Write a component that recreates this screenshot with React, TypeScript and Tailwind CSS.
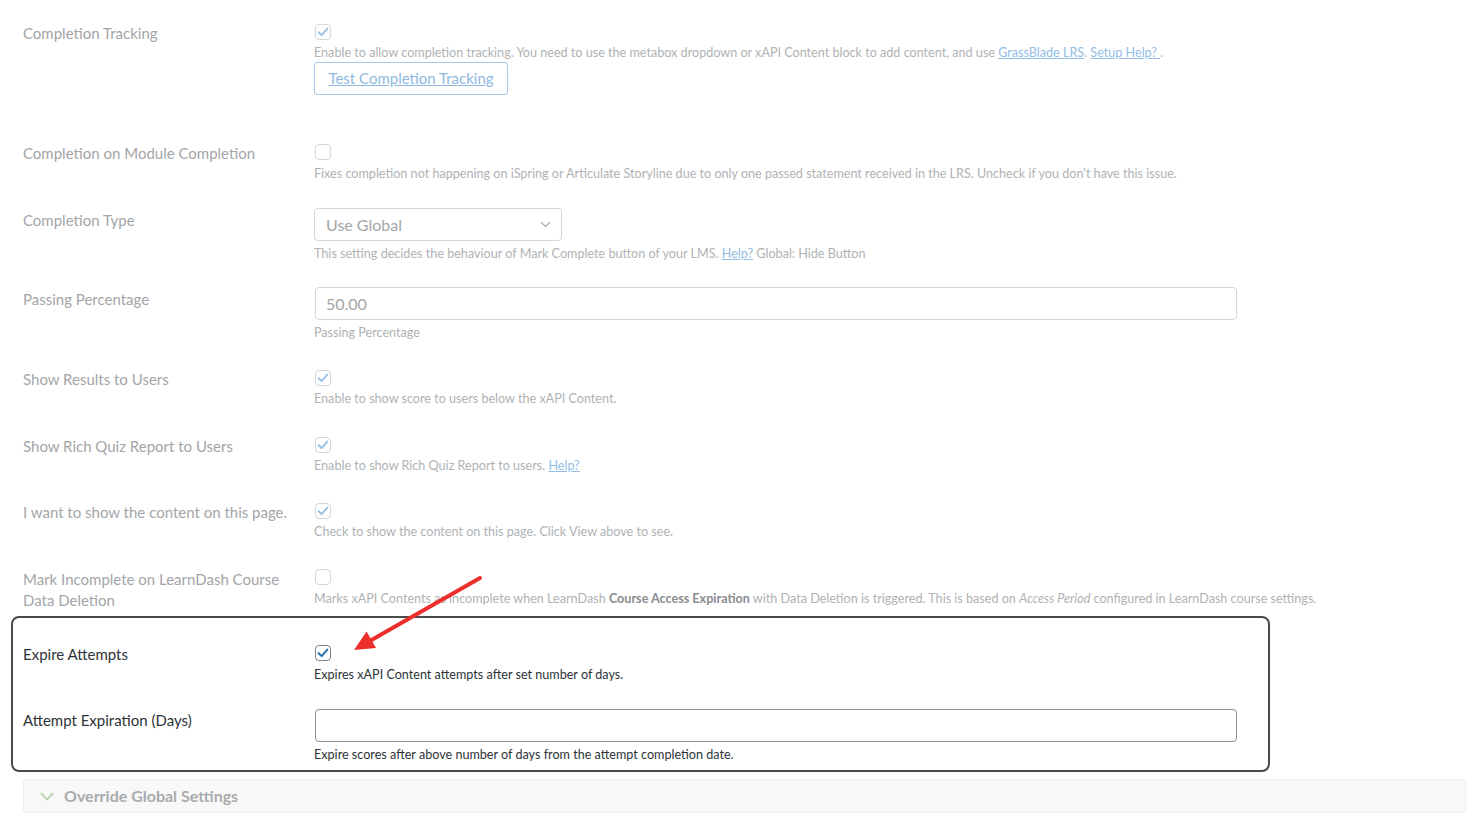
import React from 'react';

const font = { fontFamily: 'Lato, "Liberation Sans", sans-serif' };

function Check({ checked, active }: { checked?: boolean; active?: boolean }) {
  return (
    <div
      className={
        'flex h-4 w-4 items-center justify-center rounded-[4px] border bg-white ' +
        (active ? 'border-[#7e8185]' : 'border-[#d5d6d8]')
      }
    >
      {checked && (
        <svg viewBox="0 0 16 16" className="h-[14px] w-[14px]">
          <path
            d="M3 8.2 L6.4 11.6 L13 4.2"
            fill="none"
            stroke={active ? '#2271b1' : '#9cc1e4'}
            strokeWidth="2.3"
            strokeLinecap="round"
            strokeLinejoin="round"
          />
        </svg>
      )}
    </div>
  );
}

function Row({
  label,
  children,
  rowClass,
  labelClass,
  active,
}: {
  label: React.ReactNode;
  children: React.ReactNode;
  rowClass: string;
  labelClass: string;
  active?: boolean;
}) {
  return (
    <div className={'flex ' + rowClass}>
      <div
        className={
          'w-[291px] shrink-0 pr-2 text-[15px] leading-[21px] ' +
          (active ? 'text-[#2c3338]' : 'text-[#a3a5a8]') +
          ' ' +
          labelClass
        }
      >
        {label}
      </div>
      <div className="flex min-w-0 flex-1 flex-col items-start">{children}</div>
    </div>
  );
}

function Desc({ children, active, className }: { children: React.ReactNode; active?: boolean; className?: string }) {
  return (
    <p
      className={
        'relative top-[1px] text-[12.6px] leading-[16px] ' +
        (active ? 'text-[#2c3338]' : 'text-[#b0b2b4]') +
        ' ' +
        (className ?? 'mt-[4px]')
      }
    >
      {children}
    </p>
  );
}

function Link({ children }: { children: React.ReactNode }) {
  return <span className="text-[#93bde4] underline">{children}</span>;
}

export default function App() {
  return (
    <div className="relative min-h-[833px] w-[1480px] bg-white pl-[23px] pt-[24px]" style={font}>
      <Row label="Completion Tracking" rowClass="" labelClass="-mt-[1px]">
        <div className="ml-[1px]">
          <Check checked />
        </div>
        <Desc>
          Enable to allow completion tracking. You need to use the metabox dropdown or xAPI Content block to add content,
          and use <Link>GrassBlade LRS</Link>. <Link>Setup Help? </Link>.
        </Desc>
        <button className="mt-[2px] h-[33px] w-[194px] rounded-[3px] border border-[#a9c9e8] bg-white text-[15px] text-[#8fb9e2] underline">
          Test Completion Tracking
        </button>
      </Row>

      <Row label="Completion on Module Completion" rowClass="mt-[49px]" labelClass="-mt-[1px]">
        <div className="ml-[1px]">
          <Check />
        </div>
        <Desc className="mt-[5px]">
          Fixes completion not happening on iSpring or Articulate Storyline due to only one passed statement received in
          the LRS. Uncheck if you don't have this issue.
        </Desc>
      </Row>

      <Row label="Completion Type" rowClass="mt-[27px]" labelClass="mt-[2px]">
        <div className="flex h-[33px] w-[248px] items-center justify-between rounded-[4px] border border-[#d5d6d8] bg-white pl-[11px] pr-[10px] text-[16px] text-[#a3a5a8]">
          <span>Use Global</span>
          <svg viewBox="0 0 12 8" className="h-[7px] w-[11px]">
            <path d="M1 1.5 L6 6.2 L11 1.5" fill="none" stroke="#a8aaac" strokeWidth="1.4" />
          </svg>
        </div>
        <Desc>
          This setting decides the behaviour of Mark Complete button of your LMS. <Link>Help?</Link> Global: Hide Button
        </Desc>
      </Row>

      <Row label="Passing Percentage" rowClass="mt-[26px]" labelClass="mt-[2px]">
        <div className="ml-[1px] flex h-[33px] w-[922px] items-center rounded-[4px] border border-[#d5d6d8] bg-white pl-[10px] text-[16px] text-[#a3a5a8]">
          50.00
        </div>
        <Desc>Passing Percentage</Desc>
      </Row>

      <Row label="Show Results to Users" rowClass="mt-[30px]" labelClass="-mt-[1px]">
        <div className="ml-[1px]">
          <Check checked />
        </div>
        <Desc>Enable to show score to users below the xAPI Content.</Desc>
      </Row>

      <Row label="Show Rich Quiz Report to Users" rowClass="mt-[31px]" labelClass="-mt-[1px]">
        <div className="ml-[1px]">
          <Check checked />
        </div>
        <Desc>
          Enable to show Rich Quiz Report to users. <Link>Help?</Link>
        </Desc>
      </Row>

      <Row label="I want to show the content on this page." rowClass="mt-[30px]" labelClass="-mt-[1px]">
        <div className="ml-[1px]">
          <Check checked />
        </div>
        <Desc>Check to show the content on this page. Click View above to see.</Desc>
      </Row>

      <Row
        label={
          <>
            Mark Incomplete on LearnDash Course
            <br />
            Data Deletion
          </>
        }
        rowClass="mt-[30px]"
        labelClass=""
      >
        <div className="ml-[1px]">
          <Check />
        </div>
        <Desc className="mt-[5px]">
          Marks xAPI Contents as incomplete when LearnDash <b className="text-[#8a8c8f]">Course Access Expiration</b> with
          Data Deletion is triggered. This is based on <i>Access Period</i> configured in LearnDash course settings.
        </Desc>
      </Row>

      <div className="ml-[-12px] mt-[5px] w-[1259px] rounded-[8px] border-2 border-[#4a4a4a] pb-[8px] pl-[10px] pt-[27px]">
        <Row label="Expire Attempts" rowClass="" labelClass="-mt-[1px]" active>
          <div className="ml-[1px]">
            <Check checked active />
          </div>
          <Desc active className="mt-[5px]">
            Expires xAPI Content attempts after set number of days.
          </Desc>
        </Row>
        <Row label="Attempt Expiration (Days)" rowClass="mt-[27px]" labelClass="mt-[1px]" active>
          <div className="ml-[1px] h-[33px] w-[922px] rounded-[4px] border border-[#8c8f94] bg-white" />
          <Desc active>Expire scores after above number of days from the attempt completion date.</Desc>
        </Row>
      </div>

      <div className="mt-[7px] flex h-[34px] w-[1443px] items-center rounded-[3px] border border-[#efefef] bg-[#f8f8f8] pl-[16px]">
        <svg viewBox="0 0 14 9" className="h-[9px] w-[14px]">
          <path d="M1 1.2 L7 7.5 L13 1.2" fill="none" stroke="#b3d0a6" strokeWidth="1.8" />
        </svg>
        <span className="ml-[10px] text-[16px] font-bold text-[#a9abad]">Override Global Settings</span>
      </div>

      <svg className="pointer-events-none absolute inset-0 h-full w-full" viewBox="0 0 1480 833">
        <line x1="480" y1="578" x2="368" y2="642" stroke="#ec2f2a" strokeWidth="4" strokeLinecap="round" />
        <polygon points="354,650 366.6,631.6 376,648" fill="#ec2f2a" />
      </svg>
    </div>
  );
}
